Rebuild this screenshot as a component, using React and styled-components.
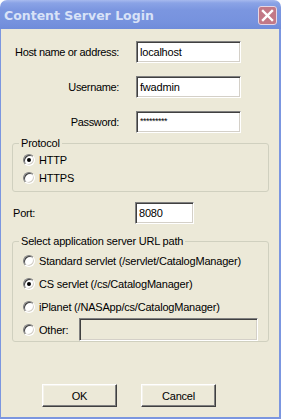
import React, { useState } from 'react'
import styled, { createGlobalStyle } from 'styled-components'

const GlobalStyle = createGlobalStyle`
  html, body {
    margin: 0;
    padding: 0;
    background: #ffffff;
  }
  body {
    font-family: "Liberation Sans", Arial, sans-serif;
    font-size: 11px;
    letter-spacing: -0.2px;
    color: #000000;
  }
`

function App() {
  const [protocol, setProtocol] = useState('http')
  const [path, setPath] = useState('cs')

  const paths = [
    { id: 'standard', label: 'Standard servlet (/servlet/CatalogManager)' },
    { id: 'cs', label: 'CS servlet (/cs/CatalogManager)' },
    { id: 'iplanet', label: 'iPlanet (/NASApp/cs/CatalogManager)' },
  ]

  return (
    <Window>
      <GlobalStyle />
      <TitleBar>
        <Title>Content Server Login</Title>
        <CloseButton>
          <svg width="13" height="13" viewBox="0 0 13 13">
            <path d="M2 2 L11 11 M11 2 L2 11" stroke="#ffffff" strokeWidth="2.4" strokeLinecap="square" />
          </svg>
        </CloseButton>
      </TitleBar>
      <Body>
        <Fields>
          <FieldRow>
            <Label>Host name or address:</Label>
            <TextBox $width={105}>localhost</TextBox>
          </FieldRow>
          <FieldRow>
            <Label>Username:</Label>
            <TextBox $width={105}>fwadmin</TextBox>
          </FieldRow>
          <FieldRow>
            <Label>Password:</Label>
            <TextBox $width={105}><Stars>*********</Stars></TextBox>
          </FieldRow>
        </Fields>

        <Group $top={4}>
          <Legend>Protocol</Legend>
          <RadioRow $height={18} onClick={() => setProtocol('http')}>
            <Radio $checked={protocol === 'http'} />
            <span>HTTP</span>
          </RadioRow>
          <RadioRow $height={18} onClick={() => setProtocol('https')}>
            <Radio $checked={protocol === 'https'} />
            <span>HTTPS</span>
          </RadioRow>
        </Group>

        <PortRow>
          <PortLabel>Port:</PortLabel>
          <TextBox $width={59}>8080</TextBox>
        </PortRow>

        <Group $top={11} $bottom={0}>
          <Legend>Select application server URL path</Legend>
          {paths.map(p => (
            <RadioRow key={p.id} $height={23} onClick={() => setPath(p.id)}>
              <Radio $checked={path === p.id} />
              <span>{p.label}</span>
            </RadioRow>
          ))}
          <RadioRow $height={23} onClick={() => setPath('other')}>
            <Radio $checked={path === 'other'} />
            <span>Other:</span>
            <OtherBox />
          </RadioRow>
        </Group>

        <Buttons>
          <Button>OK</Button>
          <Button>Cancel</Button>
        </Buttons>
      </Body>
    </Window>
  )
}

export default App

const Window = styled.div`
  width: 281px;
  height: 419px;
  display: flex;
  flex-direction: column;
`

const TitleBar = styled.div`
  height: 29px;
  flex: none;
  display: flex;
  align-items: center;
  justify-content: space-between;
  padding: 0 4px 0 4px;
  box-sizing: border-box;
  border-radius: 7px 7px 0 0;
  background: linear-gradient(#a6b9ee 0px, #8aa3e6 3px, #7b96e0 10px, #7692de 22px, #6f8cda 29px);
`

const Title = styled.div`
  font-family: "DejaVu Sans", "Liberation Sans", sans-serif;
  font-weight: bold;
  font-size: 12.5px;
  color: #d8e2f7;
  letter-spacing: 0;
  padding-top: 1px;
`

const CloseButton = styled.div`
  width: 19px;
  height: 19px;
  box-sizing: border-box;
  border: 1px solid #e6d6e4;
  border-radius: 3px;
  background: #c27886;
  display: flex;
  align-items: center;
  justify-content: center;
  margin-top: 1px;
`

const Body = styled.div`
  flex: 1;
  display: flex;
  flex-direction: column;
  background: #ece9d8;
  border-left: 1px solid #7b96e0;
  border-right: 2px solid #7b96e0;
  border-bottom: 2px solid #7b96e0;
  padding: 12px 10px 10px 11px;
`

const Fields = styled.div`
  display: flex;
  flex-direction: column;
  gap: 13px;
`

const FieldRow = styled.div`
  display: flex;
  align-items: center;
  gap: 17px;
`

const Label = styled.div`
  width: 107px;
  flex: none;
  display: flex;
  justify-content: flex-end;
  white-space: nowrap;
  letter-spacing: -0.35px;
`

const TextBox = styled.div`
  width: ${p => p.$width}px;
  height: 22px;
  flex: none;
  box-sizing: border-box;
  background: #ffffff;
  border: 1px solid;
  border-color: #808080 #ffffff #ffffff #808080;
  box-shadow: inset 1px 1px 0 #404040, inset -1px -1px 0 #d4d0c8;
  padding: 0 3px;
  line-height: 20px;
  white-space: nowrap;
  overflow: hidden;
`

const Stars = styled.span`
  font-size: 9px;
  letter-spacing: -0.5px;
  position: relative;
  top: -2px;
`

const Group = styled.fieldset`
  margin: ${p => p.$top}px 0 0 0;
  padding: 1px 10px ${p => (p.$bottom ?? 4)}px 10px;
  border: 1px solid #d0d0bf;
  border-radius: 3px;
  min-width: 0;
`

const Legend = styled.legend`
  padding: 0 2px;
  margin-left: -4px;
  line-height: 13px;
`

const RadioRow = styled.label`
  display: flex;
  align-items: center;
  height: ${p => p.$height}px;
  gap: 4px;
  cursor: default;
  white-space: nowrap;
`

const Radio = styled.span`
  position: relative;
  width: 12px;
  height: 12px;
  flex: none;
  border-radius: 50%;
  box-sizing: border-box;
  background: #ffffff;
  border: 1px solid;
  border-color: #808080 #ffffff #ffffff #808080;
  box-shadow: inset 1px 1px 0 #404040, inset -1px -1px 0 #d4d0c8;

  &::after {
    content: '';
    display: ${p => (p.$checked ? 'block' : 'none')};
    position: absolute;
    left: 3px;
    top: 3px;
    width: 4px;
    height: 4px;
    border-radius: 50%;
    background: #000000;
  }
`

const OtherBox = styled(TextBox)`
  width: 179px;
  height: 23px;
  margin-left: auto;
  background: #ece9d8;
`

const PortRow = styled.div`
  display: flex;
  align-items: center;
  margin-top: 10px;
  padding-left: 1px;
`

const PortLabel = styled.div`
  width: 122px;
`

const Buttons = styled.div`
  margin-top: auto;
  display: flex;
  gap: 24px;
  padding-left: 30px;
`

const Button = styled.button`
  width: 75px;
  height: 23px;
  font-family: "Liberation Sans", Arial, sans-serif;
  font-size: 11px;
  letter-spacing: -0.2px;
  color: #000000;
  background: #ece9d8;
  border: 1px solid;
  border-color: #ffffff #404040 #404040 #ffffff;
  box-shadow: inset -1px -1px 0 #808080, inset 1px 1px 0 #f4f2ea;
  padding: 0;
`
